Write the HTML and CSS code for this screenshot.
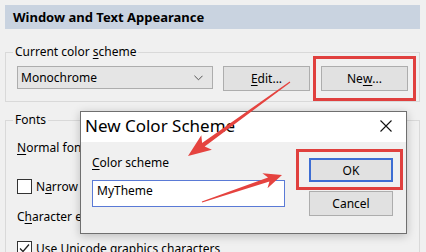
FILE: index.html
```html
<!DOCTYPE html>
<html>
<head>
<meta charset="utf-8">
<link rel="stylesheet" href="styles.css">
</head>
<body>
<div class="page">
  <div class="header">Window and Text Appearance</div>
  <fieldset class="group scheme">
    <legend>Current color <u>s</u>cheme</legend>
    <div class="scheme-row">
      <div class="select">
        <span>Monochrome</span>
        <svg class="chev" width="10" height="6" viewBox="0 0 10 6"><path d="M0.5 0.5 L5 5 L9.5 0.5" fill="none" stroke="#444" stroke-width="1"/></svg>
      </div>
      <button class="btn edit"><u>E</u>dit...</button>
      <div class="hl-wrap">
        <button class="btn new">Ne<u>w</u>...</button>
        <span class="hl hl-new"></span>
      </div>
    </div>
  </fieldset>
  <fieldset class="group fonts">
    <legend>Fonts</legend>
    <div class="line"><u>N</u>ormal font size</div>
    <div class="check narrow"><span class="box"></span><span>N<u>a</u>rrow font</span></div>
    <div class="line char"><span>C<u>h</u>aracter encoding</span></div>
    <div class="check unicode"><span class="box"><svg width="13" height="13" viewBox="0 0 13 13"><path d="M2 6.5 L5 9.5 L11 2.5" fill="none" stroke="#222" stroke-width="1.3"/></svg></span><span><u>U</u>se Unicode graphics characters</span></div>
  </fieldset>
</div>

<div class="dialog">
  <div class="titlebar">
    <span class="title">New Color Scheme</span>
    <svg class="close" width="12" height="12" viewBox="0 0 12 12"><path d="M0.5 0.5 L11.5 11.5 M11.5 0.5 L0.5 11.5" stroke="#111" stroke-width="1.1" fill="none"/></svg>
  </div>
  <div class="dbody">
    <div class="dleft">
      <div class="dlabel"><u>C</u>olor scheme</div>
      <div class="textbox">MyTheme</div>
    </div>
    <div class="dright">
      <div class="hl-wrap">
        <button class="btn ok">OK</button>
        <span class="hl hl-ok"></span>
      </div>
      <button class="btn cancel">Cancel</button>
    </div>
  </div>
</div>

<svg class="arrows" width="426" height="252" viewBox="0 0 426 252">
  <polygon points="289.65,81.51 202.09,143.06 201.33,135.20 188,156 211.91,149.78 204.67,146.62 290.35,82.49" fill="#e5433f"/>
  <polygon points="201.81,201.43 268.03,177.39 262.38,173.18 282,175 267.50,188.34 269.43,181.57 202.19,202.57" fill="#e5433f"/>
</svg>
</body>
</html>
```

FILE: styles.css
```css
* { box-sizing: border-box; }
html, body { margin: 0; padding: 0; }
body {
  width: 426px;
  height: 252px;
  overflow: hidden;
  position: relative;
  background: #f0f0f0;
  font-family: "Noto Sans", "DejaVu Sans", sans-serif;
  font-size: 12px;
  color: #000;
}
u { text-decoration-thickness: 1px; text-underline-offset: 2px; }

.page { padding: 5px 6px 0 5px; }

.header {
  height: 24px;
  background: #c9d3e0;
  padding-left: 8px;
  font-weight: bold;
  font-size: 13px;
  line-height: 24px;
}

.group {
  margin: 0;
  border: 1px solid #d9d9d9;
  min-width: 0;
}
.group legend {
  padding: 0 2px;
  margin-left: -4px;
  line-height: 16px;
}

.scheme { margin-top: 15px; padding: 6px 11px 10px 11px; }
.scheme-row { display: flex; align-items: flex-start; }

.select {
  width: 196px;
  height: 23px;
  background: #e5e5e5;
  border: 1px solid #adadad;
  display: flex;
  align-items: center;
  justify-content: space-between;
  padding: 0 9px 0 3px;
}
.chev { display: block; margin-top: 1px; width: 9px; height: 6px; }

.btn {
  font: inherit;
  color: #000;
  background: #e1e1e1;
  border: 1px solid #adadad;
  padding: 0;
  margin: 0;
  display: flex;
  align-items: center;
  justify-content: center;
}
.edit { width: 87px; height: 25px; margin-left: 10px; }
.hl-wrap { position: relative; }
.scheme-row .hl-wrap { margin-left: 11px; }
.new { width: 87px; height: 25px; }

.hl {
  position: absolute;
  border: 3px solid #e0403e;
  pointer-events: none;
}
.hl-new { left: -8px; right: -8px; top: -10px; bottom: -10px; }
.hl-ok { left: -13px; right: -10px; top: -9px; bottom: -8px; }

.fonts { margin-top: 10px; padding: 12px 11px 0 11px; height: 160px; }
.line { line-height: 16px; white-space: nowrap; }
.check {
  display: flex;
  align-items: center;
  height: 15px;
  line-height: 15px;
  white-space: nowrap;
}
.box {
  width: 15px;
  height: 15px;
  border: 1px solid #333;
  background: #fff;
  margin-right: 4px;
  flex: none;
  display: flex;
  align-items: center;
  justify-content: center;
}
.box svg { display: block; }
.narrow { margin-top: 23px; }
.char { margin-top: 15px; }
.unicode { margin-top: 16px; }

.dialog {
  position: absolute;
  left: 80px;
  top: 111px;
  width: 327px;
  height: 123px;
  border: 1px solid #6f6f6f;
  background: #f0f0f0;
  box-shadow: 0 2px 9px rgba(0, 0, 0, 0.22);
  display: flex;
  flex-direction: column;
}
.titlebar {
  height: 30px;
  background: #fff;
  display: flex;
  align-items: center;
  justify-content: space-between;
  padding: 0 14px 3px 4px;
}
.title { font-size: 17px; line-height: 20px; }
.close { display: block; }

.dbody {
  flex: 1;
  display: flex;
  justify-content: space-between;
  padding: 13px 13px 0 11px;
}
.dlabel { line-height: 16px; }
.textbox {
  margin-top: 9px;
  width: 193px;
  height: 27px;
  border: 1px solid #5a7ad6;
  background: #fff;
  padding: 1px 0 0 4px;
  line-height: 18px;
}
.dright { margin-top: 3px; display: flex; flex-direction: column; }
.ok { width: 84px; height: 24px; border: 2px solid #3d6dd3; }
.cancel { width: 84px; height: 25px; margin-top: 9px; }

.arrows {
  position: absolute;
  left: 0;
  top: 0;
  pointer-events: none;
}
```
